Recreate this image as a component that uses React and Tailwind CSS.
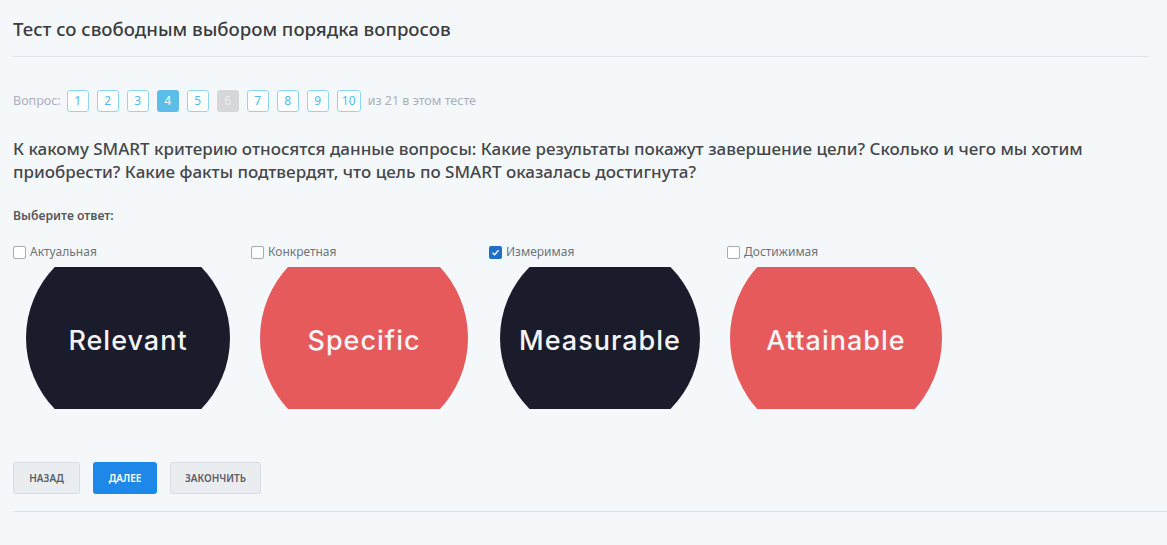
import React, { useState } from 'react';

const pages = [1, 2, 3, 4, 5, 6, 7, 8, 9, 10];

const options = [
  { label: 'Актуальная', word: 'Relevant', bg: 'bg-[#1b1c2b]', size: 'w-[204px] h-[204px]', shift: 'ml-[13px]' },
  { label: 'Конкретная', word: 'Specific', bg: 'bg-[#e65a5c]', size: 'w-[208px] h-[208px]', shift: 'ml-[9px]' },
  { label: 'Измеримая', word: 'Measurable', bg: 'bg-[#1b1c2b]', size: 'w-[200px] h-[200px]', shift: 'ml-[11px]' },
  { label: 'Достижимая', word: 'Attainable', bg: 'bg-[#e65a5c]', size: 'w-[212px] h-[212px]', shift: 'ml-[3px]' },
];

const PageBox = ({ n }) => {
  if (n === 4) {
    return (
      <span className="flex h-[22px] w-[22px] items-center justify-center rounded-[3px] bg-[#5cbde9] text-[12px] text-white">
        {n}
      </span>
    );
  }
  if (n === 6) {
    return (
      <span className="flex h-[22px] w-[22px] items-center justify-center rounded-[3px] bg-[#d6d7d8] text-[12px] text-[#ececec]">
        {n}
      </span>
    );
  }
  return (
    <span
      className={`flex h-[22px] ${n === 10 ? 'w-[24px]' : 'w-[22px]'} items-center justify-center rounded-[3px] border border-[#8ed6f6] bg-white text-[12px] text-[#50b9ea]`}
    >
      {n}
    </span>
  );
};

export default function App() {
  const [checked, setChecked] = useState(2);

  return (
    <div className="min-h-[545px] w-full bg-[#f5f8fb] font-['Noto_Sans',sans-serif] text-[#3d3f43]">
      <div className="pl-[13px] pr-[18px] pt-[15px]">
        <h1 className="text-[18.6px] font-medium leading-[27px] text-[#3a3c40]">
          Тест со свободным выбором порядка вопросов
        </h1>
        <div className="mt-[14px] h-px bg-[#dce4e9]" />
      </div>

      <div className="px-[13px]">
        <div className="mt-[33px] flex items-center gap-[8px]">
          <span className="mr-[-2px] text-[12.5px] text-[#a9b0b8]">Вопрос:</span>
          {pages.map((n) => (
            <PageBox key={n} n={n} />
          ))}
          <span className="ml-[-1px] text-[12.5px] text-[#a9b0b8]">из 21 в этом тесте</span>
        </div>

        <p className="mt-[25px] max-w-[1100px] text-[17px] font-medium leading-[23px] text-[#45474b]">
          К какому SMART критерию относятся данные вопросы: Какие результаты покажут завершение цели? Сколько и чего мы хотим приобрести? Какие факты подтвердят, что цель по SMART оказалась достигнута?
        </p>

        <div className="mt-[24px] text-[12.2px] font-semibold text-[#55585d]">Выберите ответ:</div>

        <div className="mt-[18px] flex">
          {options.map((o, i) => (
            <div key={o.word} className="w-[238px] shrink-0">
              <label className="flex cursor-pointer items-center gap-[4px]" onClick={() => setChecked(i)}>
                {checked === i ? (
                  <span className="flex h-[13px] w-[13px] items-center justify-center rounded-[2px] bg-[#1f6fc8]">
                    <svg viewBox="0 0 12 12" className="h-[9px] w-[9px]">
                      <path d="M2 6.2 L4.8 9 L10 3" fill="none" stroke="white" strokeWidth="1.8" />
                    </svg>
                  </span>
                ) : (
                  <span className="h-[13px] w-[13px] rounded-[2px] border border-[#a7acb1] bg-white" />
                )}
                <span className="text-[12px] text-[#6e7378]">{o.label}</span>
              </label>
              <div className={`mt-[6px] flex h-[142px] w-[212px] items-center overflow-hidden ${o.shift}`}>
                <div className={`flex shrink-0 items-center justify-center rounded-full pt-[6px] ${o.bg} ${o.size}`}>
                  <span className="font-['Inter',sans-serif] text-[27px] font-medium tracking-[1px] text-[#f4f4f6]">
                    {o.word}
                  </span>
                </div>
              </div>
            </div>
          ))}
        </div>

        <div className="mt-[53px] flex gap-[13px]">
          <button className="h-[32px] w-[67px] rounded-[3px] border border-[#d6dce1] bg-[#e9edf0] text-[10px] font-semibold text-[#5b5f64]">
            НАЗАД
          </button>
          <button className="h-[32px] w-[64px] rounded-[3px] bg-[#1e88e8] text-[10px] font-semibold text-white">
            ДАЛЕЕ
          </button>
          <button className="h-[32px] w-[91px] rounded-[3px] border border-[#d6dce1] bg-[#e9edf0] text-[10px] font-semibold text-[#5b5f64]">
            ЗАКОНЧИТЬ
          </button>
        </div>
      </div>

      <div className="ml-[13px] mt-[17px] h-px bg-[#d8e1e7]" />
    </div>
  );
}
